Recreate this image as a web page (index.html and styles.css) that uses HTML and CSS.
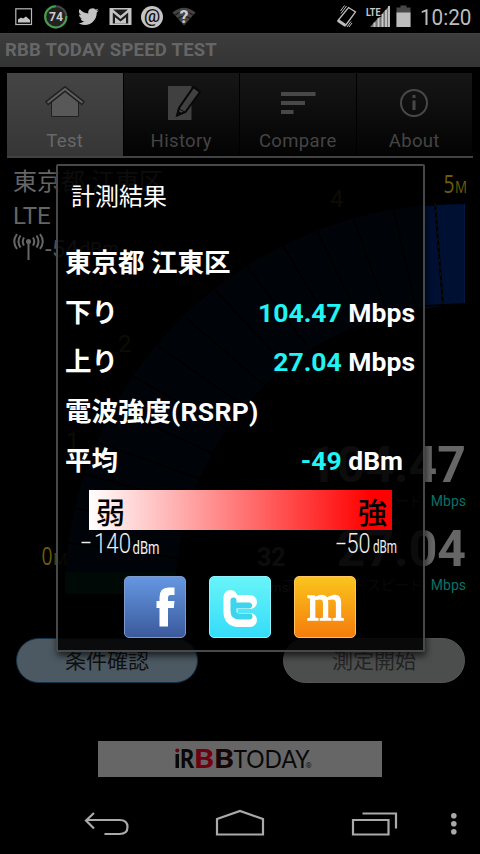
FILE: index.html
```html
<!DOCTYPE html>
<html lang="ja">
<head>
<meta charset="utf-8">
<title>RBB TODAY SPEED TEST</title>
<link rel="stylesheet" href="styles.css">
</head>
<body>
<header class="status">
  <svg class="status-left" width="200" height="33" viewBox="0 0 200 33">
    <rect x="15.8" y="8.8" width="15.7" height="15.7" fill="none" stroke="#b8b8b8" stroke-width="1.2"/>
    <path d="M18 22.500v-3l3-2 2 1 3-2 4 3.500v2.500z" fill="#c4c4c4"/>
    <circle cx="55.800" cy="16.800" r="10.600" fill="#222" stroke="#444" stroke-width="2"/>
    <path d="M55.800 6.200A10.600 10.600 0 1 0 66.300 16" fill="none" stroke="#43a047" stroke-width="2"/>
    <text x="56" y="21" class="t-battery" textLength="14" lengthAdjust="spacingAndGlyphs">74</text>
    <path transform="translate(78.200 6.300) scale(.86)" fill="#c4c4c4" d="M23.950 4.570a10 10 0 0 1-2.820.770 4.960 4.960 0 0 0 2.160-2.720 9.900 9.900 0 0 1-3.120 1.190 4.920 4.920 0 0 0-8.380 4.480A13.900 13.900 0 0 1 1.640 3.160a4.920 4.920 0 0 0 1.520 6.570 4.900 4.900 0 0 1-2.230-.610v.060a4.920 4.920 0 0 0 3.950 4.830 5 5 0 0 1-2.210.080 4.940 4.940 0 0 0 4.600 3.420A9.870 9.870 0 0 1 0 19.540a13.990 13.990 0 0 0 7.550 2.210c9.050 0 14-7.500 14-13.980l-.020-.640a9.900 9.900 0 0 0 2.420-2.560z"/>
    <path d="M109.500 8h22v17h-22z" fill="#c4c4c4"/>
    <path d="M113 9.500h15l-7.500 6.300z" fill="#1c1c1c"/>
    <path d="M112.800 23.500V12.500l7.700 6.500 7.700-6.500v11z" fill="#1c1c1c"/>
    <path d="M115 23.500v-6.300l5.500 4.300 5.500-4.300v6.300z" fill="#c4c4c4"/>
    <circle cx="152" cy="17" r="11" fill="#c4c4c4"/>
    <text x="152" y="21.800" class="t-at">@</text>
    <path d="M172.500 12.500Q184 3 195.500 12.500L184 25.500z" fill="#444"/>
    <path d="M175 15q9-7 18 0M178 18.500q6-4.500 12 0" fill="none" stroke="#161616" stroke-width="1.200"/>
    <text x="184" y="22.500" class="t-q">?</text>
  </svg>
  <svg class="status-right" width="150" height="33" viewBox="330 0 150 33">
    <g fill="none" stroke="#bdbdbd" stroke-width="1.300">
      <path d="M338 20.500 348.500 7.500 355.500 12 345.500 25.500z"/>
      <path d="m338 20.500 7.500 5" stroke-width="3"/>
      <path d="m341 13.500 5.500-7.500M340.500 11l4-5.500M347 27l4-5.500M349 27l3-4" stroke-width="1"/>
    </g>
    <path d="M370 27 389.500 5.500V27z" fill="#777"/>
    <path d="M374.500 27v-4.500M378.500 27v-9M382.500 27V14M386 27V10M389 27V6" stroke="#c8c8c8" stroke-width="1.800"/>
    <text x="366" y="15.500" class="t-lte" textLength="14.500" lengthAdjust="spacingAndGlyphs">LTE</text>
    <path d="M396.500 7.500h4v-2h6v2h4V27h-14z" fill="#484848"/>
    <path d="M396.500 12.500h14V27h-14z" fill="#bdbdbd"/>
    <text x="420" y="25" class="t-clock" textLength="51.500" lengthAdjust="spacingAndGlyphs">10:20</text>
  </svg>
</header>
<h1 class="titlebar">RBB TODAY SPEED TEST</h1>
<nav class="tabs">
  <div class="tab active">
    <svg width="44" height="36" viewBox="0 0 44 36"><path d="M8.500 16 22 5l13.500 11v14.500h-27z" fill="#585858" stroke="#202020"/><path d="M3.500 17.500 22 3l18.500 14.500" fill="none" stroke="#202020" stroke-width="5"/><path d="M4.500 16.800 22 3l17.500 13.800" fill="none" stroke="#606060" stroke-width="2"/></svg>
    <span>Test</span>
  </div>
  <div class="tab">
    <svg width="44" height="36" viewBox="0 0 44 36"><path d="M9 0h23.500v34H9z" fill="#404040"/><path d="M18 29.500 20 22 34.500 1 41 6 26.500 26z" fill="#404040" stroke="#080808" stroke-width="2"/><path d="m19.500 22.500 7 4M18 29.500l2.500-3.500 2 1.500z" fill="#080808" stroke="#080808"/></svg>
    <span>History</span>
  </div>
  <div class="tab">
    <svg width="44" height="36" viewBox="0 0 44 36"><path d="M5 8h34.500M5 17h24M5 26h12.500" stroke="#484848" stroke-width="3.800"/></svg>
    <span>Compare</span>
  </div>
  <div class="tab">
    <svg width="44" height="36" viewBox="0 0 44 36"><circle cx="22" cy="17" r="13" fill="none" stroke="#484848" stroke-width="2"/><path d="M22 14.500v9.500M22 9v3" stroke="#484848" stroke-width="3"/></svg>
    <span>About</span>
  </div>
</nav>
<main class="stage">
  <svg class="gauge" width="480" height="445" viewBox="0 160 480 445">
    <path d="M65 594A400 391 0 0 1 465 203V305A290 289 0 0 0 175 594z" fill="#06224a"/>
    <path d="M65 572H176V594H65z" fill="#084a3a"/>
    <g stroke="#000" stroke-width="2">
      <path d="M68 543 178 558M74 508l109 23M84 474l107 29M97 442l103 37M114 408l98 45M134 377l93 52M158 346l86 60M185 317l78 67M215 290l70 75M246 265l61 81M282 244l52 87M315 227l45 93M352 215l35 97M393 207l23 101"/>
    </g>
    <path d="M425 205Q445 203 464.500 203V304L425 307z" fill="#001032"/>
    <path d="M425 205Q445 203 464.500 203M425 306l40-2M435 203l8 102" fill="none" stroke="#000" stroke-width="2"/>
    <path d="M435 203l8 102" fill="none" stroke="#332b1a" stroke-width=".5" stroke-dasharray="3 4"/>
    <g class="tick"><text x="330" y="207">4</text><text x="118" y="352">2</text><text x="66" y="449">1</text></g>
    <g class="limit"><text x="443.500" y="192.500" textLength="11" lengthAdjust="spacingAndGlyphs">5</text><text x="455" y="192.500" class="unit" textLength="12" lengthAdjust="spacingAndGlyphs">M</text><text x="41.500" y="564.500" textLength="11" lengthAdjust="spacingAndGlyphs">0</text><text x="53" y="564.500" class="unit">M</text></g>
  </svg>
  <div class="info">
    <span>東京都 江東区</span>
    <span>LTE</span>
    <span class="signal"><svg width="31" height="30" viewBox="0 0 31 30"><g fill="none" stroke="#666" stroke-width="2"><path d="M15.500 9v18"/><path d="M11 4.500q-2.500 4 0 8M20 4.500q2.500 4 0 8M7.500 2.500q-4 6 0 12M23.500 2.500q4 6 0 12M4 1q-5.500 7.500 0 15M27 1q5.500 7.500 0 15"/></g><circle cx="15.500" cy="8.500" r="2.500" fill="#666"/></svg>-54<small>dBm</small></span>
  </div>
  <div class="readout">
    <b>104.47</b><p><i>ダウンロードスピード</i><span>Mbps</span></p>
    <b>27.04</b><p><i>アップロードスピード</i><span>Mbps</span></p>
  </div>
  <div class="ping">32<small>ms</small></div>
  <div class="buttons"><button class="check">条件確認</button><button class="start">測定開始</button></div>
  <div class="banner">
    <svg width="284" height="36" viewBox="98 741 284 36">
      <circle cx="177.300" cy="750.500" r="2" fill="#6d0010"/><path d="M175.500 754h3.500v14h-3.500z" fill="#080808"/>
      <text x="180" y="768" class="logo-bold" fill="#080808" textLength="14" lengthAdjust="spacingAndGlyphs">R</text>
      <text x="194" y="768" class="logo-bold" fill="#70000f" textLength="20" lengthAdjust="spacingAndGlyphs">B</text>
      <text x="214" y="768" class="logo-bold" fill="#170606" textLength="20" lengthAdjust="spacingAndGlyphs">B</text>
      <text x="233.500" y="768" class="logo-thin" textLength="76" lengthAdjust="spacingAndGlyphs">TODAY</text>
      <text x="305.500" y="768" class="logo-r">®</text>
    </svg>
  </div>
</main>
<footer class="navbar">
  <svg width="480" height="48" viewBox="0 806 480 48"><g fill="none" stroke="#aaa" stroke-width="2.200"><path d="M104.500 834h15q8 0 8-7t-8-7H86M94 813l-8 7.500 8 8"/><path d="M217 834.500V819l23-8 23 8v15.500z"/><path d="M353 820h35.500v14.500H353zM362.500 813.500h33.500v15"/></g><g fill="#aaa"><circle cx="453.800" cy="815.800" r="2.800"/><circle cx="453.800" cy="823.800" r="2.800"/><circle cx="453.800" cy="831.800" r="2.800"/></g></svg>
</footer>
<section class="dialog">
  <h2>計測結果</h2>
  <div class="row"><span class="jp">東京都 江東区</span></div>
  <div class="row"><span class="jp">下り</span><span><em>104.47</em> Mbps</span></div>
  <div class="row"><span class="jp">上り</span><span><em>27.04</em> Mbps</span></div>
  <div class="row"><span class="jp">電波強度<span class="latin">(RSRP)</span></span></div>
  <div class="row avg"><span class="jp">平均</span><span><em>-49</em> dBm</span></div>
  <div class="scale"><span>弱</span><span>強</span></div>
  <svg class="range" width="320" height="34" viewBox="80 528 320 34">
    <path d="M81.500 542.500h9M336.500 543.500h9" stroke="#eee" stroke-width="1.500"/>
    <g fill="#eee"><text x="94" y="553" class="num" textLength="37" lengthAdjust="spacingAndGlyphs">140</text><text x="132.500" y="553.500" class="dbm" textLength="27" lengthAdjust="spacingAndGlyphs">dBm</text><text x="346.500" y="553" class="num" textLength="24" lengthAdjust="spacingAndGlyphs">50</text><text x="373" y="553" class="dbm" textLength="24" lengthAdjust="spacingAndGlyphs">dBm</text></g>
  </svg>
  <div class="share">
    <div class="app fb"><svg width="60" height="60" viewBox="0 0 60 60"><path d="M34.500 49.500V31h-3v-7h3v-3.500q0-10 9-10h6V18h-4q-2.500 0-2.500 3v3h6.500l-.700 7H43v18.500z" fill="#fff"/></svg></div>
    <div class="app tw"><svg width="60" height="60" viewBox="0 0 60 60"><path d="M20.500 20v15q0 8 8 8H40M22 25h18" fill="none" stroke="#fff" stroke-width="14" stroke-linecap="round" stroke-linejoin="round"/><path d="M23.500 23.500v10.500q0 5.500 6 5.500h10M24 28.500h15" fill="none" stroke="#3dd5ee" stroke-width="6" stroke-linecap="round" stroke-linejoin="round"/></svg></div>
    <div class="app mx"><svg width="60" height="60" viewBox="0 0 60 60"><text x="30.500" y="43" class="mix" textLength="37" lengthAdjust="spacingAndGlyphs">m</text></svg></div>
  </div>
</section>
</body>
</html>
```
FILE: styles.css
```css
* { box-sizing: border-box; }
body { margin: 0; width: 480px; height: 854px; overflow: hidden; position: relative; background: #000; font-family: Roboto, "Noto Sans CJK JP", sans-serif; }
h1, h2, p { margin: 0; }
svg { display: block; }
.status { height: 33px; display: flex; justify-content: space-between; }
.t-battery { font-size: 13px; font-weight: 700; fill: #ccc; text-anchor: middle; }
.t-at { font-size: 18px; font-weight: 500; text-anchor: middle; fill: #111; }
.t-q { font-size: 18px; font-weight: 700; text-anchor: middle; fill: #ccc; }
.t-lte { font-size: 11.500px; font-weight: 700; fill: #c8c8c8; stroke: #000; stroke-width: 2px; paint-order: stroke; }
.t-clock { font-size: 22px; fill: #bcbcbc; }
.titlebar { height: 34px; padding-left: 5px; line-height: 32px; font-size: 18.500px; font-weight: 700; letter-spacing: .22px; color: #666; background: linear-gradient(#3c3c3c, #343434); border-top: 1px solid #424242; white-space: nowrap; }
.tabs { margin: 6px 7px 0; height: 85px; display: grid; grid-template-columns: repeat(4, 1fr); border-bottom: 2px solid #424242; }
.tab { display: flex; flex-direction: column; align-items: center; padding-top: 13px; color: #444; font-size: 18.500px; letter-spacing: .35px; background: linear-gradient(#161616, #030303); border-right: 1px solid #000; }
.tab.active { background: linear-gradient(#454545, #363636); color: #686868; }
.tab span { line-height: 24px; margin-top: 7px; }
.stage { height: 648px; display: grid; grid-template-columns: 480px; grid-template-rows: 472px 60px 176px; }
.gauge { grid-area: 1 / 1; margin-top: 2px; }
.tick { font-size: 24px; fill: #6b6120; }
.limit { font-size: 25px; fill: #6b5d08; font-family: "Open Sans", sans-serif; }
.unit { font-size: 16px; }
.info { grid-area: 1 / 1; padding: 7px 0 0 13px; display: flex; flex-direction: column; font-size: 24px; line-height: 34px; color: #666; }
.info > span { height: 34px; }
.info .signal { display: flex; height: 34px; line-height: 32px; gap: 1px; }
.signal small { font-size: 19px; }
.readout { grid-area: 1 / 1; align-self: start; margin-top: 282px; padding-right: 14px; text-align: right; }
.readout b { display: block; height: 49px; line-height: 50px; font-size: 50px; color: #666; }
.readout p { height: 35px; line-height: 24px; font-size: 14px; color: #087267; }
.readout i { font-style: normal; color: #444; margin-right: 8px; }
.ping { grid-area: 1 / 1; margin: 385px 0 0 257px; height: 60px; line-height: 30px; font-size: 25px; font-weight: 700; color: #666; display: flex; flex-direction: column; }
.ping small { font-size: 13px; font-weight: 400; padding-left: 13px; }
.buttons { grid-area: 2 / 1; display: flex; justify-content: space-between; padding: 8px 15px 0 16px; }
.buttons button { width: 182px; height: 45px; border-radius: 24px; padding: 0 0 3px; font: 21px "Noto Sans CJK JP", sans-serif; }
.check { color: #101010; background: #4c5962; border: 1px solid #12334a; }
.start { color: #242424; background: #4c4e4e; border: 1px solid #555; }
.banner { grid-area: 3 / 1; justify-self: center; width: 284px; height: 36px; margin-top: 51px; background: #666; }
.logo-bold { font: 900 26px Lato, sans-serif; }
.logo-thin { font: 400 25px Lato, sans-serif; fill: #080808; }
.logo-r { font-size: 8px; fill: #161616; }
.navbar { position: absolute; left: 0; bottom: 0; height: 48px; background: #000; }
.dialog { position: absolute; left: 56px; top: 164px; width: 369px; height: 488px; border: 2px solid #484848; border-radius: 2px; background: rgba(0, 0, 0, .88); box-shadow: 1px 4px 7px rgba(0, 0, 0, .65); color: #fff; padding: 0 7px; }
.dialog h2 { height: 72px; padding: 14px 0 0 6px; line-height: 34px; font-size: 24px; font-weight: 400; }
.row { height: 49.500px; line-height: 49.500px; display: flex; justify-content: space-between; padding-right: 1px; font-size: 26.500px; font-weight: 700; white-space: nowrap; }
.row em { font-style: normal; color: #20f4f4; }
.row.avg { padding-right: 13px; }
.latin { letter-spacing: .3px; }
.scale { margin: 4px 0 0 24px; width: 303px; height: 40px; padding: 0 5px 0 7px; display: flex; justify-content: space-between; background: linear-gradient(90deg, #fff, #f00 93%); color: #000; font: 500 29px/42px "Noto Sans CJK JP", sans-serif; }
.range { margin: -2px 0 0 15px; }
.num { font: 300 28px Roboto, sans-serif; }
.dbm { font: 400 18px Roboto, sans-serif; }
.share { display: flex; gap: 23px; padding-left: 59px; margin-top: 14px; }
.app { flex: none; width: 62px; height: 62px; border-radius: 5px; overflow: hidden; }
.fb { background: linear-gradient(#6597e2, #3b5a9b); border: 1px solid #7f9bcc; }
.tw { background: linear-gradient(#68f4f9, #35dcf8); border: 1px solid #8cf4ff; }
.mx { background: linear-gradient(#fac51c, #f57c0c); border: 1px solid #ffc65c; }
.mix { font: 400 53px "Liberation Serif", serif; fill: #fff; stroke: #fff; stroke-width: 1.500px; text-anchor: middle; }
```
